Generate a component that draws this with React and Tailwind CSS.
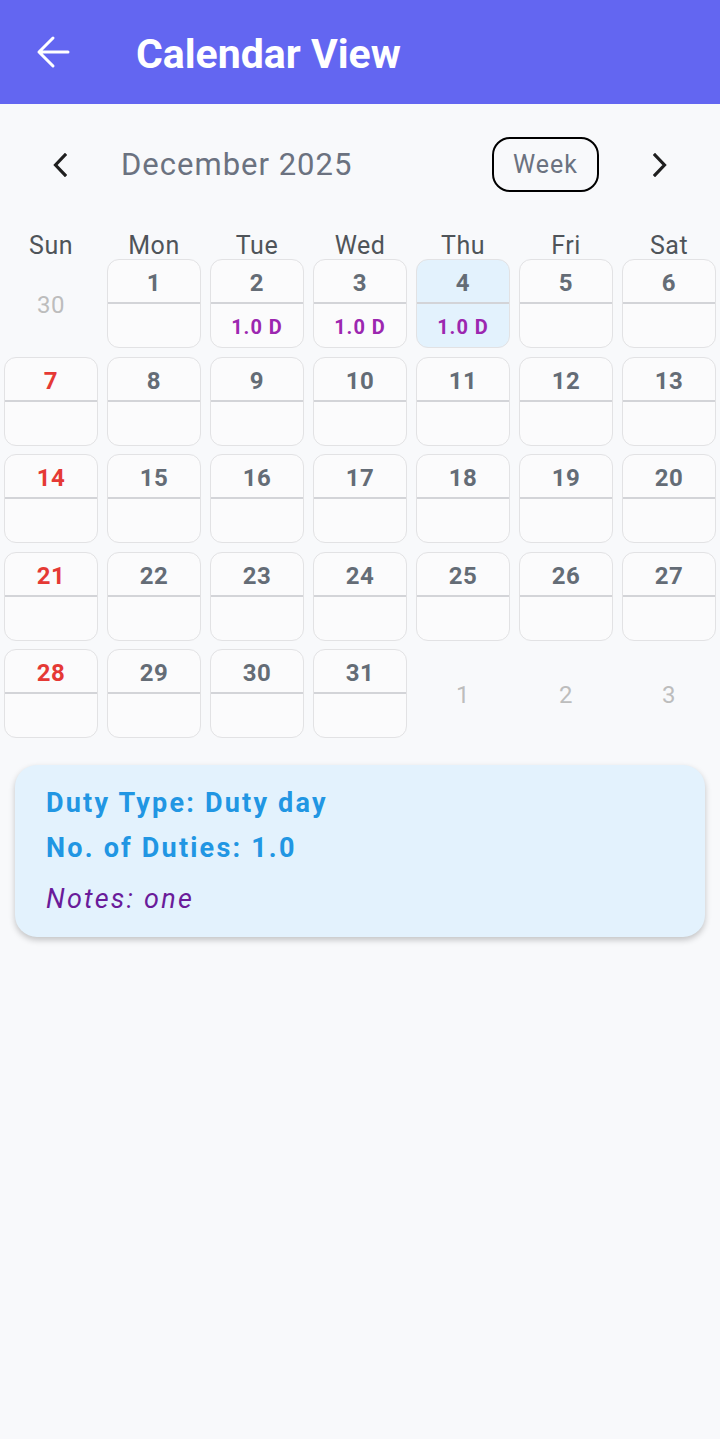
import React from "react";

const days = ["Sun", "Mon", "Tue", "Wed", "Thu", "Fri", "Sat"];

function buildCells() {
  const cells = [{ n: 30, out: true }];
  for (let d = 1; d <= 31; d++) {
    cells.push({ n: d, duty: d >= 2 && d <= 4, sel: d === 4 });
  }
  cells.push({ n: 1, out: true }, { n: 2, out: true }, { n: 3, out: true });
  return cells;
}

function Cell({ c, idx }) {
  if (c.out) {
    return (
      <div className="h-[89px] flex items-center justify-center pt-[3px] text-[24px] text-[#bdbdbd] tracking-[0.5px]">
        {c.n}
      </div>
    );
  }
  const sunday = idx % 7 === 0;
  return (
    <div
      className={
        "h-[89px] rounded-[12px] border-[1.5px] border-[#e2e2e4] flex flex-col overflow-hidden " +
        (c.sel ? "bg-[#e3f2fd]" : "bg-[#fbfbfc]")
      }
    >
      <div
        className={
          "h-[42px] flex items-center justify-center pt-[4px] text-[24px] font-bold tracking-[0.5px] " +
          (sunday ? "text-[#e53935]" : "text-[#646c76]")
        }
      >
        {c.n}
      </div>
      <div className="h-[2px] bg-[#d3d4d8]" />
      <div className="flex-1 flex items-center justify-center pt-[3px] text-[20px] font-bold text-[#9c27b0] tracking-[1px]">
        {c.duty ? "1.0 D" : ""}
      </div>
    </div>
  );
}

export default function App() {
  const cells = buildCells();
  return (
    <div
      className="min-h-[1439px] bg-[#f8f9fb]"
      style={{ fontFamily: "Roboto, 'Noto Sans', sans-serif" }}
    >
      <div className="h-[104px] bg-[#6366f1] flex items-center">
        <svg
          className="ml-[36px]"
          width="34"
          height="34"
          viewBox="0 0 34 34"
          fill="none"
          stroke="white"
          strokeWidth="3"
          strokeLinecap="round"
          strokeLinejoin="round"
        >
          <path d="M32 17H3M17 3L3 17l14 14" />
        </svg>
        <div className="ml-[66px] pt-[4px] text-[41px] font-bold text-white leading-none">
          Calendar View
        </div>
      </div>

      <div className="mt-[33px] h-[55px] flex items-center pl-[53px] pr-[53px]">
        <svg width="14" height="24" viewBox="0 0 14 24" fill="none" stroke="#1f1f1f" strokeWidth="3.2" strokeLinecap="square">
          <path d="M12 2L2.5 12l9.5 10" />
        </svg>
        <div className="ml-[54px] pt-[2px] text-[31px] text-[#6b7280] tracking-[1px]">December 2025</div>
        <div className="ml-auto w-[107px] h-[55px] rounded-[18px] border-2 border-black flex items-center justify-center pt-[1px] text-[25px] text-[#6b7280] tracking-[1px]">
          Week
        </div>
        <svg className="ml-[54px]" width="14" height="24" viewBox="0 0 14 24" fill="none" stroke="#1f1f1f" strokeWidth="3.2" strokeLinecap="square">
          <path d="M2 2l9.5 10L2 22" />
        </svg>
      </div>

      <div className="mt-[35px] px-[4px] grid grid-cols-7 gap-x-[9px] h-[28px]">
        {days.map((d) => (
          <div key={d} className="flex items-center justify-center text-[25px] text-[#4f5459] tracking-[0.5px]">
            {d}
          </div>
        ))}
      </div>

      <div className="mt-[4px] px-[4px] grid grid-cols-7 gap-x-[9px] gap-y-[8.5px]">
        {cells.map((c, i) => (
          <Cell key={i} c={c} idx={i} />
        ))}
      </div>

      <div className="mt-[27px] mx-[15px] rounded-[22px] bg-[#e3f2fd] shadow-[0_3px_6px_rgba(0,0,0,0.22)] pl-[31px] pt-[16px] pb-[15px]">
        <div className="text-[27px] font-bold text-[#2196e3] leading-[45px] tracking-[2.2px]">Duty Type: Duty day</div>
        <div className="text-[27px] font-bold text-[#2196e3] leading-[45px] tracking-[2.2px]">No. of Duties: 1.0</div>
        <div className="mt-[6px] text-[27px] italic text-[#6a1b9a] leading-[45px] tracking-[2.2px]">Notes: one</div>
      </div>
    </div>
  );
}
